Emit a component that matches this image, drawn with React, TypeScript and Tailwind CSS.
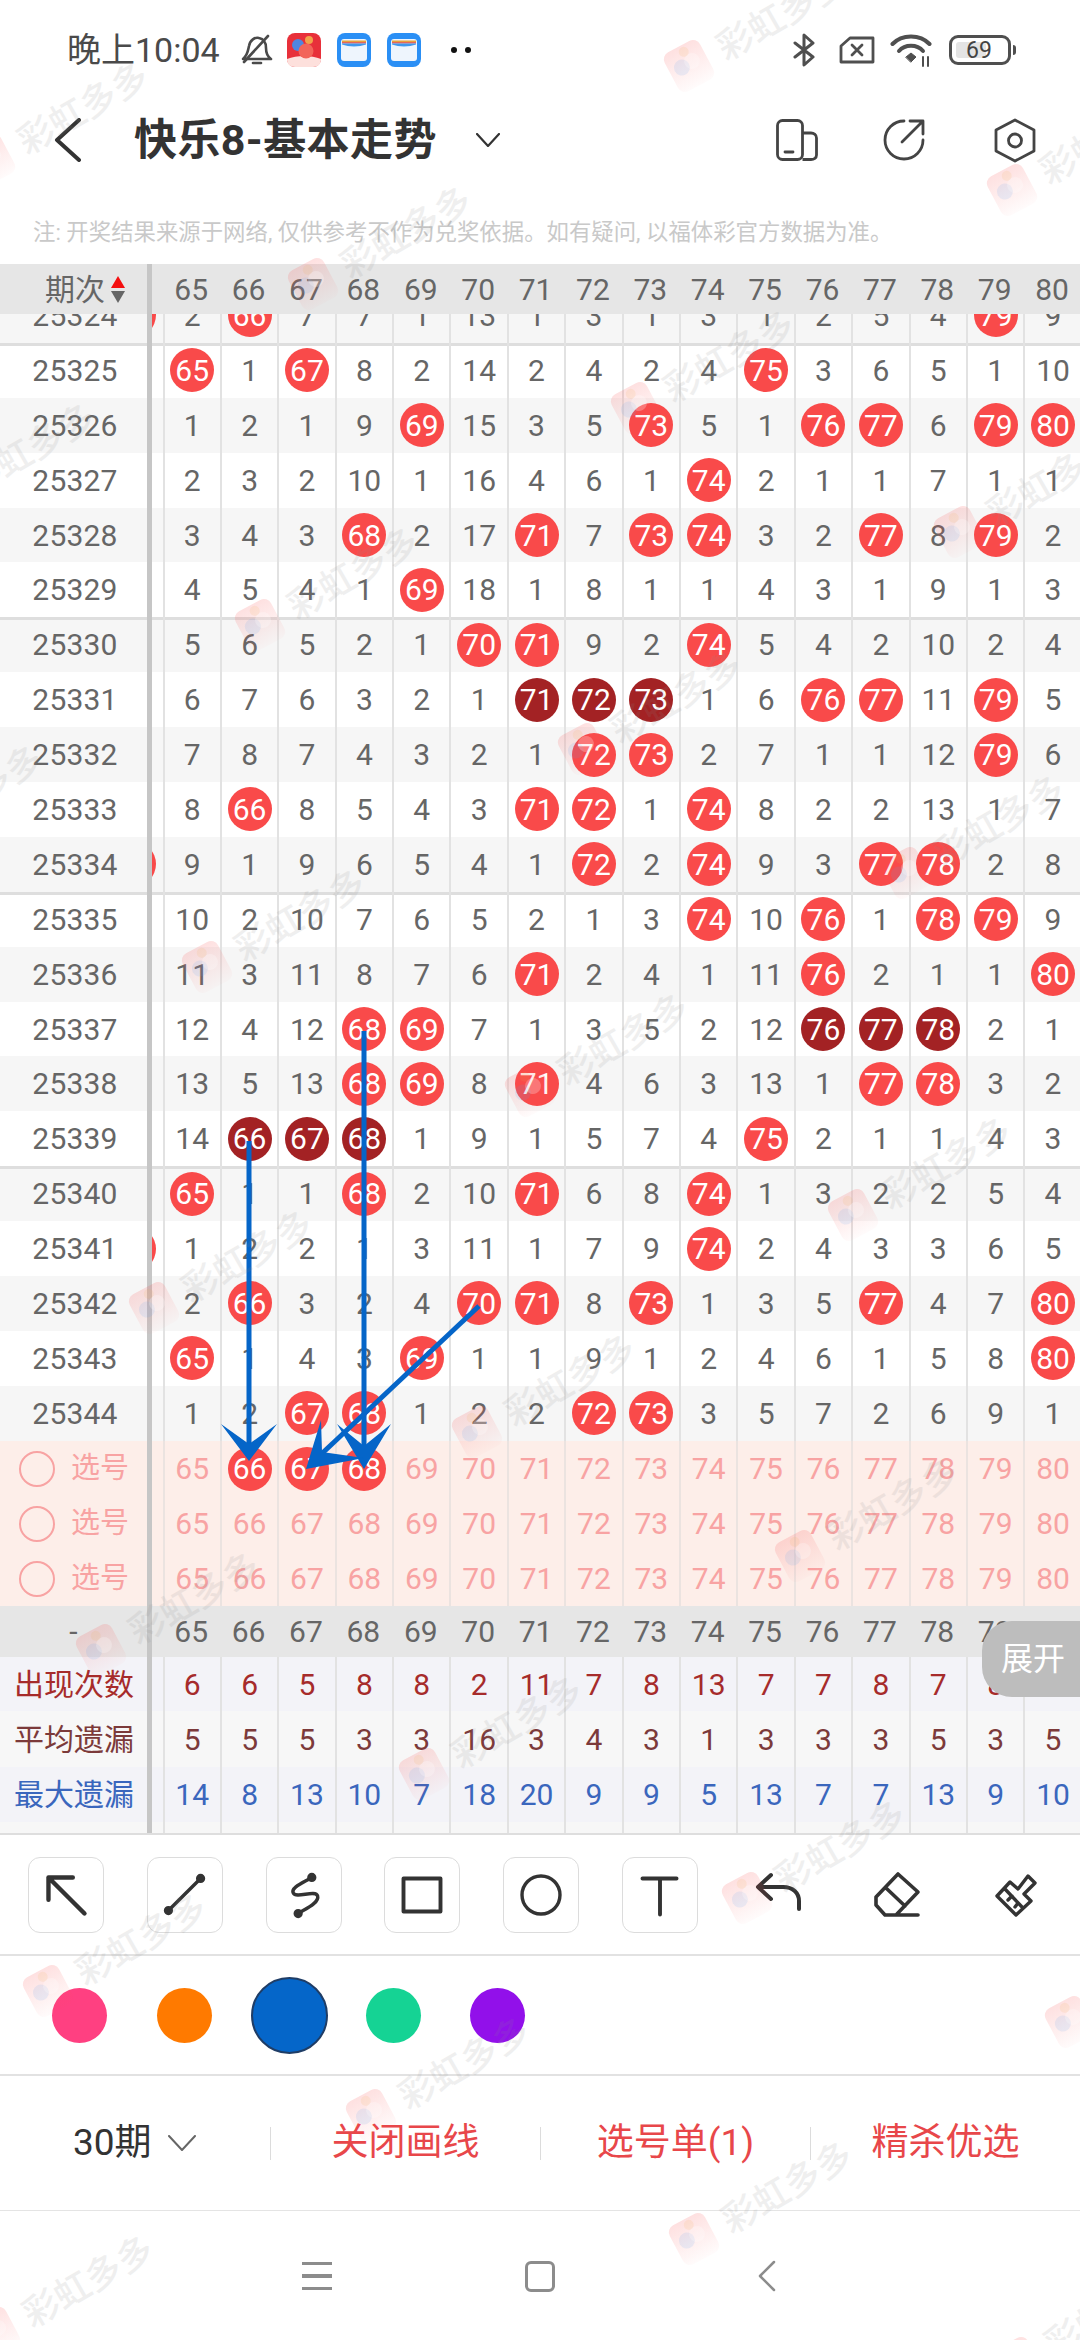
const cols = [65, 66, 67, 68, 69, 70, 71, 72, 73, 74, 75, 76, 77, 78, 79, 80]

// a trailing d marks a dark ball
const rows = [
  { id: 25324, nums: '2 66 7 7 1 13 1 3 1 3 1 2 5 4 79 9', stub: true },
  { id: 25325, nums: '65 1 67 8 2 14 2 4 2 4 75 3 6 5 1 10', line: true },
  { id: 25326, nums: '1 2 1 9 69 15 3 5 73 5 1 76 77 6 79 80' },
  { id: 25327, nums: '2 3 2 10 1 16 4 6 1 74 2 1 1 7 1 1' },
  { id: 25328, nums: '3 4 3 68 2 17 71 7 73 74 3 2 77 8 79 2' },
  { id: 25329, nums: '4 5 4 1 69 18 1 8 1 1 4 3 1 9 1 3' },
  { id: 25330, nums: '5 6 5 2 1 70 71 9 2 74 5 4 2 10 2 4', line: true },
  { id: 25331, nums: '6 7 6 3 2 1 71d 72d 73d 1 6 76 77 11 79 5' },
  { id: 25332, nums: '7 8 7 4 3 2 1 72 73 2 7 1 1 12 79 6' },
  { id: 25333, nums: '8 66 8 5 4 3 71 72 1 74 8 2 2 13 1 7' },
  { id: 25334, nums: '9 1 9 6 5 4 1 72 2 74 9 3 77 78 2 8', stub: true },
  { id: 25335, nums: '10 2 10 7 6 5 2 1 3 74 10 76 1 78 79 9', line: true },
  { id: 25336, nums: '11 3 11 8 7 6 71 2 4 1 11 76 2 1 1 80' },
  { id: 25337, nums: '12 4 12 68 69 7 1 3 5 2 12 76d 77d 78d 2 1' },
  { id: 25338, nums: '13 5 13 68 69 8 71 4 6 3 13 1 77 78 3 2' },
  { id: 25339, nums: '14 66d 67d 68d 1 9 1 5 7 4 75 2 1 1 4 3' },
  { id: 25340, nums: '65 1 1 68 2 10 71 6 8 74 1 3 2 2 5 4', line: true },
  { id: 25341, nums: '1 2 2 1 3 11 1 7 9 74 2 4 3 3 6 5', stub: true },
  { id: 25342, nums: '2 66 3 2 4 70 71 8 73 1 3 5 77 4 7 80' },
  { id: 25343, nums: '65 1 4 3 69 1 1 9 1 2 4 6 1 5 8 80' },
  { id: 25344, nums: '1 2 67 68 1 2 2 72 73 3 5 7 2 6 9 1' },
]

const stats = [
  { label: '出现次数', nums: [6, 6, 5, 8, 8, 2, 11, 7, 8, 13, 7, 7, 8, 7, 8, 5], text: 'text-[#a62b2b]', bg: 'bg-[#f3f3f8]', h: 'h-[54px]' },
  { label: '平均遗漏', nums: [5, 5, 5, 3, 3, 16, 3, 4, 3, 1, 3, 3, 3, 5, 3, 5], text: 'text-[#7c3a3a]', bg: 'bg-[#f7f7f7]', h: 'h-[56px]' },
  { label: '最大遗漏', nums: [14, 8, 13, 10, 7, 18, 20, 9, 9, 5, 13, 7, 7, 13, 9, 10], text: 'text-[#3a66bd]', bg: 'bg-[#f3f3f8]', h: 'h-[55px]' },
]

function Ball({ value, dark }: { value: string; dark?: boolean }) {
  return (
    <span className={`flex h-11 w-11 items-center justify-center rounded-full text-[30px] text-white ${dark ? 'bg-[#a32224]' : 'bg-[#f94a4a]'}`}>
      {value}
    </span>
  )
}

function Cell({ children, className = '' }: { children?: React.ReactNode; className?: string }) {
  return (
    <div className={`flex h-full w-[57.4px] shrink-0 items-center justify-center border-l-2 border-[#e2e2e2] text-[30px] ${className}`}>
      {children}
    </div>
  )
}

function Row({ id, nums, line, stub, odd }: { id: number; nums: string; line?: boolean; stub?: boolean; odd: boolean }) {
  return (
    <div className={`flex h-[54.9px] shrink-0 items-center text-[#666] ${odd ? 'bg-[#f6f6f6]' : 'bg-white'} ${line ? 'shadow-[inset_0_3px_0_#dedede]' : ''}`}>
      <div className="flex h-full w-[152px] shrink-0 items-center justify-center border-r-[5px] border-[#c6c6c6] pl-[3px] text-[30px] tracking-[0.2px]">{id}</div>
      <div className="flex h-full w-[10.5px] shrink-0 items-center overflow-hidden">
        {stub && <span className="-ml-[40px] h-11 w-11 shrink-0 rounded-full bg-[#f94a4a]" />}
      </div>
      {nums.split(' ').map((n, i) => {
        const value = n.replace('d', '')
        return (
          <Cell key={i}>
            {Number(value) === cols[i] ? <Ball value={value} dark={n.endsWith('d')} /> : n}
          </Cell>
        )
      })}
    </div>
  )
}

function PickRow({ first }: { first?: boolean }) {
  return (
    <div className="flex h-[55px] items-center bg-[#fdeee9] text-[#f8a3a3]">
      <div className="flex h-full w-[152px] shrink-0 items-center gap-4 border-r-[5px] border-[#c6c6c6] pl-[19px] text-[29px]">
        <span className="h-9 w-9 rounded-full border-2 border-[#f8a3a3]" />
        选号
      </div>
      <div className="w-[10.5px] shrink-0" />
      {cols.map((c) => (
        <Cell key={c} className="border-[#ebe3e0]">
          {first && c >= 66 && c <= 68 ? <Ball value={String(c)} /> : c}
        </Cell>
      ))}
    </div>
  )
}

function HeaderRow({ left, className }: { left: React.ReactNode; className: string }) {
  return (
    <div className={`flex items-center bg-[#e6e6e6] text-[#666] ${className}`}>
      <div className="flex h-full w-[152px] shrink-0 items-center justify-center border-r-[5px] border-[#c6c6c6] text-[30px]">{left}</div>
      <div className="w-[10.5px] shrink-0" />
      {cols.map((c) => (
        <div key={c} className="flex w-[57.4px] shrink-0 justify-center text-[30px]">{c}</div>
      ))}
    </div>
  )
}

function Watermarks() {
  const marks: { x: number; y: number }[] = []
  for (let i = -4; i < 6; i++) {
    for (let j = -7; j < 3; j++) {
      const x = 48 + i * 323 - j * 53
      const y = 1991 + i * 124 + j * 341.5
      if (x > -200 && x < 1110 && y > 0 && y < 2440) marks.push({ x, y })
    }
  }
  return (
    <>
      {marks.map((m) => (
        <div key={`${m.x}-${m.y}`} className="pointer-events-none absolute h-0 w-0" style={{ left: m.x, top: m.y }}>
          <svg width="56" height="60" viewBox="0 0 56 60" className="absolute -left-[28px] -top-[30px]">
            <defs>
              <linearGradient id="wm-fade" x1="0" y1="0" x2="0" y2="1">
                <stop offset="0" stopColor="#f94a4a" stopOpacity="0.17" />
                <stop offset="1" stopColor="#f94a4a" stopOpacity="0.02" />
              </linearGradient>
            </defs>
            <g transform="rotate(-28 28 30)">
              <rect x="8" y="8" width="40" height="44" rx="8" fill="url(#wm-fade)" />
              <circle cx="21" cy="28" r="8" fill="#5b9ff0" fillOpacity="0.13" />
              <circle cx="33" cy="27" r="8" fill="#ffffff" fillOpacity="0.25" />
              <circle cx="30" cy="15" r="5" fill="#f2b04a" fillOpacity="0.12" />
            </g>
          </svg>
          <div className="absolute left-[31px] -top-[33px] h-[36px] origin-left -rotate-[30deg] whitespace-nowrap text-[36px] font-medium leading-none text-[#8a8a8a] opacity-[0.13]">
            彩虹多多
          </div>
        </div>
      ))}
    </>
  )
}

function Arrows() {
  return (
    <svg width="1080" height="2340" viewBox="0 0 1080 2340" className="pointer-events-none absolute left-0 top-0">
      <g stroke="#0565c8" strokeWidth="5" fill="#0565c8">
        <line x1="249" y1="1141" x2="249" y2="1450" />
        <line x1="364" y1="1031" x2="364" y2="1455" />
        <line x1="479" y1="1306" x2="315" y2="1460" />
      </g>
      <g fill="#0565c8">
        <polygon points="249,1461 221,1424 249,1444 277,1424" />
        <polygon points="364,1469 337,1424 364,1446 391,1424" />
        <polygon points="306,1469 321,1420 322,1452 364,1458" />
      </g>
    </svg>
  )
}

function WalletIcon() {
  return (
    <svg width="34" height="34" viewBox="0 0 34 34">
      <rect width="34" height="34" rx="8" fill="#2a8ff5" />
      <rect x="4" y="6" width="26" height="22" rx="3" fill="#eef5fd" />
      <rect x="5" y="7.5" width="24" height="1.6" fill="#e8a23a" />
      <rect x="5" y="9.1" width="24" height="1.4" fill="#e2574c" />
      <path d="M5 10.5 H29 V11.5 C22 14 12 14 5 11.5 Z" fill="#3f98ee" />
    </svg>
  )
}

function StatusBar() {
  return (
    <div className="relative flex h-[100px] items-center pl-[67px] text-[#4a4a4a]">
      <span className="w-[173px] text-[34px] leading-none">晚上10:04</span>
      <svg width="34" height="32" viewBox="0 0 34 32" fill="none" stroke="#4a4a4a" strokeWidth="2.6" strokeLinejoin="round" strokeLinecap="round">
        <path d="M3 25 C8 21 8 16 9 12 C10 6 15 3 19 4 C24 5 26 9 26 14 C26 19 28 23 31 25 Z" />
        <path d="M13 29 H21" />
        <path d="M4 28 L28 2" />
      </svg>
      <svg width="34" height="34" viewBox="0 0 34 34" className="ml-[13px]">
        <rect width="34" height="34" rx="8" fill="#e8303a" />
        <path d="M0 26 C10 22 24 22 34 26 V26 C34 31 31 34 26 34 H8 C3 34 0 31 0 26 Z" fill="#fde0dc" />
        <circle cx="11" cy="12" r="6" fill="#4f86e0" />
        <circle cx="19" cy="18" r="7.5" fill="#f2655a" />
        <circle cx="22" cy="7" r="4" fill="#f2a24a" />
      </svg>
      <span className="ml-[16px]"><WalletIcon /></span>
      <span className="ml-[16px]"><WalletIcon /></span>
      <span className="ml-[30px] h-[6px] w-[6px] rounded-full bg-[#111]" />
      <span className="ml-[8px] h-[6px] w-[6px] rounded-full bg-[#111]" />
      <div className="ml-auto mr-[64px] flex items-center">
        <svg width="22" height="34" viewBox="0 0 22 34" fill="none" stroke="#4f4f4f" strokeWidth="3" strokeLinejoin="round" strokeLinecap="round">
          <path d="M2 10 L20 24 L11 32 V2 L20 10 L2 24" />
        </svg>
        <svg width="36" height="28" viewBox="0 0 36 28" fill="none" stroke="#4f4f4f" strokeWidth="2.8" strokeLinejoin="round" className="ml-[24px]">
          <path d="M11 2 H34 V26 H2 V10 Z" />
          <path d="M13 9 L23 19 M23 9 L13 19" strokeLinecap="round" />
        </svg>
        <svg width="44" height="34" viewBox="0 0 44 34" fill="none" stroke="#4f4f4f" strokeWidth="4" strokeLinecap="round" className="ml-[15px]">
          <path d="M2.5 11 C12 1 30 1 39.5 11" />
          <path d="M9 18 C15 11 27 11 33 18" />
          <path d="M16 24 L21 20 L26 24 L21 29 Z" fill="#4f4f4f" strokeWidth="1" strokeLinejoin="round" />
          <path d="M33 24 V33 M38 24 V33" strokeWidth="2" />
        </svg>
        <div className="relative ml-[15px] flex h-[30px] w-[62px] items-center rounded-[9px] border-[3.5px] border-[#4f4f4f] text-[#444]">
          <span className="absolute left-[4px] h-[16px] w-[30px] rounded-[3px] bg-[#e4e4e4]" />
          <span className="relative w-full pr-[2px] text-center text-[23px] leading-none">69</span>
        </div>
        <span className="ml-[2px] h-[10px] w-[3px] rounded-r bg-[#4f4f4f]" />
      </div>
    </div>
  )
}

function TitleBar() {
  return (
    <div className="flex h-[80px] items-center pl-[54px] text-[#333]">
      <svg width="28" height="44" viewBox="0 0 28 44" fill="none" stroke="#333" strokeWidth="4" strokeLinecap="round" strokeLinejoin="round">
        <path d="M25 2 L3 22 L25 42" />
      </svg>
      <span className="ml-[52px] w-[342px] text-[43px] font-bold leading-none tracking-[0.4px]">快乐8-基本走势</span>
      <svg width="24" height="14" viewBox="0 0 24 14" fill="none" stroke="#333" strokeWidth="2.2" strokeLinecap="round" strokeLinejoin="round">
        <path d="M1 1 L12 13 L23 1" />
      </svg>
      <div className="ml-auto mr-[44px] flex items-center">
        <svg width="42" height="42" viewBox="0 0 42 42" fill="none" stroke="#444" strokeWidth="2.8" strokeLinejoin="round">
          <rect x="1.5" y="1.5" width="25" height="39" rx="5" />
          <path d="M26.5 14 H35 C38 14 40.5 16 40.5 19 V36 C40.5 39 38 40.5 35 40.5 H26.5" />
          <path d="M9 33 H17" strokeLinecap="round" />
        </svg>
        <svg width="43" height="42" viewBox="0 0 43 42" fill="none" stroke="#444" strokeWidth="2.8" strokeLinecap="round" strokeLinejoin="round" className="ml-[64px]">
          <path d="M22 2 A19 19 0 1 0 41 21" />
          <path d="M20 23 L40 3 M28 2 H41 V15" />
        </svg>
        <svg width="42" height="45" viewBox="0 0 42 45" fill="none" stroke="#444" strokeWidth="2.8" strokeLinejoin="round" className="ml-[69px]">
          <path d="M21 2 L40 12 V33 L21 43 L2 33 V12 Z" />
          <circle cx="21" cy="22.5" r="6.5" />
        </svg>
      </div>
    </div>
  )
}

function Tool({ children, boxed = true }: { children: React.ReactNode; boxed?: boolean }) {
  return (
    <div className={`flex h-[76px] w-[76px] shrink-0 items-center justify-center rounded-[12px] ${boxed ? 'border border-[#dcdcdc]' : ''}`}>
      <svg width="76" height="76" viewBox="0 0 76 76" fill="none" stroke="#333" strokeWidth="3.5" strokeLinecap="round" strokeLinejoin="round">
        {children}
      </svg>
    </div>
  )
}

function Toolbar() {
  return (
    <div className="flex h-[121px] items-center gap-[42.8px] border-b-[2px] border-[#e2e2e2] pl-[28px]">
      <Tool>
        <path d="M20 43 V20 H45 M20 20 L57 57" strokeWidth="4.5" />
      </Tool>
      <Tool>
        <path d="M54 21 L21 54" />
        <circle cx="54" cy="21" r="3" fill="#333" />
        <circle cx="21" cy="54" r="3" fill="#333" />
      </Tool>
      <Tool>
        <path d="M46 20 C38 25 24 30 27 36 C30 42 50 32 52 39 C54 46 40 52 32 57" />
        <circle cx="46" cy="20" r="3" fill="#333" />
        <circle cx="32" cy="57" r="3" fill="#333" />
      </Tool>
      <Tool>
        <rect x="19" y="21" width="38" height="34" strokeWidth="4" strokeLinecap="butt" />
      </Tool>
      <Tool>
        <circle cx="38" cy="38" r="19.5" />
      </Tool>
      <Tool>
        <path d="M20 21 H55 M38 21 V58" strokeWidth="4" />
      </Tool>
      <Tool boxed={false}>
        <path d="M30 18 L17 30 L30 42 M17 30 H42 C52 30 58 36 58 44 V52" strokeWidth="4" />
      </Tool>
      <Tool boxed={false}>
        <path d="M16 40 L38 17 L58 35 L36 58 H25 L16 48 Z M26 31 L45 49 M36 58 H58" strokeWidth="3.6" />
      </Tool>
      <Tool boxed={false}>
        <path d="M19 39 L32 25 L40 32 L50 19 L57 26 L46 37 L53 44 L38 58 Z M27 32 L44 50 M30 43 L34 39 M37 50 L40 46" strokeWidth="3.4" />
      </Tool>
    </div>
  )
}

function Palette() {
  return (
    <div className="flex h-[120px] items-center border-b-[2px] border-[#e2e2e2] pl-[52px]">
      <span className="h-[55px] w-[55px] rounded-full bg-[#ff4081]" />
      <span className="ml-[50px] h-[55px] w-[55px] rounded-full bg-[#ff7a00]" />
      <span className="ml-[39px] h-[77px] w-[77px] rounded-full border-2 border-[#1f3d66] bg-[#0566c9]" />
      <span className="ml-[38px] h-[55px] w-[55px] rounded-full bg-[#15d394]" />
      <span className="ml-[49px] h-[55px] w-[55px] rounded-full bg-[#9210ea]" />
    </div>
  )
}

function Actions() {
  const sep = 'flex h-[33px] w-[270px] items-center justify-center border-l border-[#dcdcdc] text-[#e8474a]'
  return (
    <div className="flex h-[135px] items-center border-b border-[#e4e4e4] text-[37px]">
      <div className="flex w-[270px] items-center pl-[73px] text-[#333]">
        30期
        <svg width="28" height="16" viewBox="0 0 28 16" fill="none" stroke="#666" strokeWidth="2" strokeLinecap="round" strokeLinejoin="round" className="ml-[16px]">
          <path d="M1 1 L14 15 L27 1" />
        </svg>
      </div>
      <div className={sep}>关闭画线</div>
      <div className={sep}>选号单(1)</div>
      <div className={sep}>精杀优选</div>
    </div>
  )
}

function NavBar() {
  return (
    <div className="flex h-[130px] items-center pl-[302px]">
      <div className="flex w-[30px] flex-col gap-[9px]">
        <span className="h-[3.5px] bg-[#8c8c8c]" />
        <span className="h-[3.5px] bg-[#8c8c8c]" />
        <span className="h-[3.5px] bg-[#8c8c8c]" />
      </div>
      <span className="ml-[193px] h-[31px] w-[30px] rounded-[6px] border-[3.5px] border-[#8c8c8c]" />
      <svg width="18" height="32" viewBox="0 0 18 32" fill="none" stroke="#8c8c8c" strokeWidth="2.5" strokeLinecap="round" strokeLinejoin="round" className="ml-[203px]">
        <path d="M16 2 L2 16 L16 30" />
      </svg>
    </div>
  )
}

export default function App() {
  return (
    <div className="relative h-[2340px] w-[1080px] overflow-hidden bg-white font-[Roboto,'Noto_Sans_CJK_SC',sans-serif]">
      <StatusBar />
      <TitleBar />
      <div className="flex h-[84px] items-center pl-[33px] pt-[20px] text-[22.4px] leading-none text-[#c9c9c9]">
        注: 开奖结果来源于网络, 仅供参考不作为兑奖依据。如有疑问, 以福体彩官方数据为准。
      </div>

      <HeaderRow
        className="h-[50px]"
        left={
          <span className="flex w-full items-center gap-[6px] pl-[45px]">
            期次
            <span className="flex flex-col gap-[3px]">
              <span className="h-0 w-0 border-x-[7.5px] border-b-[12px] border-x-transparent border-b-[#f40f0f]" />
              <span className="h-0 w-0 border-x-[7.5px] border-t-[12px] border-x-transparent border-t-[#666]" />
            </span>
          </span>
        }
      />

      <div className="h-[1127px] overflow-hidden">
        <div className="-mt-[26px] flex flex-col">
          {rows.map((r, i) => (
            <Row key={r.id} {...r} odd={i % 2 === 0} />
          ))}
        </div>
      </div>

      <PickRow first />
      <PickRow />
      <PickRow />

      <HeaderRow className="h-[51px]" left="-" />

      {stats.map((s) => (
        <div key={s.label} className={`flex items-center ${s.bg} ${s.h} ${s.text}`}>
          <div className="flex h-full w-[152px] shrink-0 items-center justify-center border-r-[5px] border-[#c6c6c6] pl-[1px] text-[30px]">{s.label}</div>
          <div className="w-[10.5px] shrink-0" />
          {s.nums.map((n, i) => (
            <Cell key={i}>{n}</Cell>
          ))}
        </div>
      ))}
      <div className="flex h-[13px] border-b-2 border-[#dedede] bg-[#f7f7f7]">
        <div className="h-full w-[152px] shrink-0 border-r-[5px] border-[#c6c6c6]" />
        <div className="w-[10.5px] shrink-0" />
        {cols.map((c) => (
          <Cell key={c} />
        ))}
      </div>

      <Toolbar />
      <Palette />
      <Actions />
      <NavBar />

      {/* floating expand tab over the stats */}
      <div className="absolute right-0 top-[1621px] flex h-[76px] w-[98px] items-center justify-center rounded-l-[30px] bg-[#bdbdbd] pl-[4px] text-[32px] text-white">
        展开
      </div>

      <Arrows />
      <Watermarks />
    </div>
  )
}
